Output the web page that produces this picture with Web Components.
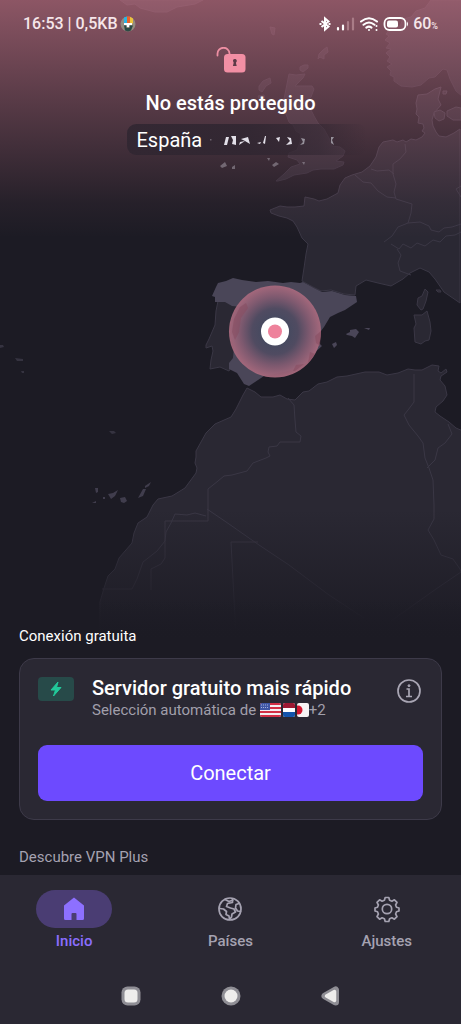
<!DOCTYPE html>
<html lang="es">
<head>
<meta charset="utf-8">
<meta name="viewport" content="width=device-width, initial-scale=1">
<title>VPN</title>
<style>
  body { margin: 0; background: #1c1b24; font-family: Roboto, "Noto Sans", sans-serif; color: #fff; }
</style>
</head>
<body>
<vpn-app></vpn-app>
<script>
const define = (name, html) => customElements.define(name, class extends HTMLElement {
  constructor() {
    super();
    const t = document.createElement('template');
    t.innerHTML = html;
    this.attachShadow({ mode: 'open' }).append(t.content.cloneNode(true));
  }
});

define('map-backdrop', `
<style>
  :host { display: block; overflow: hidden; }
  svg { display: block; width: 100%; height: 100%; }
  .land { fill: #2a2833; stroke: #3a3745; stroke-width: 1; stroke-linejoin: round; }
  .line { fill: none; stroke: #3a3745; stroke-width: 1; stroke-linejoin: round; }
  .soft { stroke: #312e3b; }
  .active { fill: #4a4658; }
</style>
<svg viewBox="0 0 461 640" preserveAspectRatio="xMidYMin slice" aria-hidden="true">
  <defs>
    <linearGradient id="alert" x1="0" y1="0" x2="0" y2="1">
      <stop offset="0" stop-color="#f08a9e" stop-opacity=".53"/>
      <stop offset=".45" stop-color="#f08a9e" stop-opacity=".27"/>
      <stop offset=".85" stop-color="#f08a9e" stop-opacity=".05"/>
      <stop offset="1" stop-color="#f08a9e" stop-opacity="0"/>
    </linearGradient>
    <linearGradient id="fade" x1="0" y1="0" x2="0" y2="1">
      <stop offset="0" stop-color="#1c1b24" stop-opacity="0"/>
      <stop offset="1" stop-color="#1c1b24"/>
    </linearGradient>
    <radialGradient id="pulse">
      <stop offset=".3" stop-color="#474a60"/>
      <stop offset=".5" stop-color="#504b61"/>
      <stop offset=".75" stop-color="#805a70" stop-opacity=".96"/>
      <stop offset="1" stop-color="#aa6a7e" stop-opacity=".93"/>
    </radialGradient>
  </defs>
  <rect width="461" height="640" fill="#1c1b24"/>
  <g class="land">
    <g class="soft">
      <path d="M120 0l7 5 8-1 5 4 15 4 12 0 10-5 18-3 8-4z"/>
      <path d="M431 0l-6 8-9 3-5 6-8 2-3 7-9 2-5 6 3 2-4 4 5 3-4 5 5 1-5 4 4 4-3 4 5 3-5 3 4 4-1 4 4 2 0 4 7 5 11 1 9-2 8-7 6-1 5-5 3-3 4 1 3 9 6 12 6 5V0z"/>
      <path d="M270 27l5 1-1 7-2-1zM319 54l4-4 4-3 1 5-4 3 0 4-4-2-2 2zM300 67l4-2 4 0 0 3-5 4-3-2zM289 74l7 1 9-1-2 4-8 8 17 0 2 3-3 8-6 5-3 3 8 3 4 8 4 7 6 6 5 9 3 8 8 1 5 4-2 5-7 5 8 1-1 3-9 4-13 0-8 1-6 3-13 2-8 4-8 2-2 0 8-7 7-7 9-3-3-4-9-3 1-4 8-3 3-8 1-8-5-3-3-6-4-3-3-8-3-2-2-10 3-3z"/>
      <path d="M259 86l4-5 7-3 1 5-5 3-4 6-3-2zM258 96l6-1 1 6-4 1z"/>
    </g>
    <path d="M441 87l-6 2-8 5-9 1-2 8 1 6-1 5 3 3-1 6 5 1 1 4-2 3 3 2-3 4-6 3-5-1-5 3-3-2-6 2-4-2-10 2-4 5-3 10-6 9-8 6-10 3-7 3-5 7-2 8-11 6-8 2-5-2-9-2-1 9-9 1-8 0-7-1-10 4 1 3 8 3 8 2 6 3 4 6 5 11 6 6-2 10-2 14-2 13 11 6 8 4 10-1 13 4 11 1 1-9 10-6 12 3 13 3 12-7 7-6 10-5 9 4 6 7 9 13 16 11V129l-6 4-8 4-7-1-3-4-3-6-1-6 2-7 7-8-3-6z"/>
    <path d="M434 112l6-2 5 3-1 6-5 2-4-3zM447 111l9-4 5 1v12l-8 0-6-4zM443 91l4 0-1 3-3 0z"/>
    <path d="M425 289l-3 7-4 2-1 7 4 5 2-1 3-8 2-9zM427 311l-5 4-8 0 2 9-2 4 1 14 6 2 4-3 4-1 2-9-1-9zM436 290l4 0 1 2-3 0z"/>
    <path d="M247 388l-4 7-7 14-5 8-16 7-9 9-5 9-5 9 0 6-1 6 2 5-1 5-11 15-13 8-14 3-5 6-6 12-9 6-4 10-2 10-13 15-4 11-7 7-4 12-4 14V640H470V434l-14-6-7-6-9-6-5-4 1-5 7-6 4-6-2-9-5-6 1-4 6-4-1-3-5 4-3-2 1-5-7-1-10 5-7 0-7-1-10 4-11 2-8-3-14 0-18 4-10 1-10 5-9 2-9 7-6 1-8 8-8-1-7-4-7 2-12 0-6-5z"/>
    <path d="M218 301l-2 10-1 14-6 14-3 6 0 3 6-2 1 5-2 9-1 9 10-2 9 4 4-7 1-7 3-9-3-10 7-16 4-12 3-5-11-1-6-4z"/>
  </g>
  <g class="active">
    <path d="M216 287l2-4 8-2 7-3 9 2 14 2 12-1 15 2 8-1 9 1 3-1 11 6 8 4 10-1 13 4 11 1 1 6-12 8-7 3-8 4-6 10-6 8 1 8 3 3-10 9-5 7-9 6-14 4-20 4-9 6-6 4-5-2-7-11-8-4 0-6 4-5 1-12-3-10 7-15 5-10-1-4-10-1-7-4-10 0 0-5-3-1z"/>
    <path d="M346 334l4-2 0-2 6-1 3 3-4 6-3-2-5-1zM364 328l6 0-1 2zM332 344l4-2 1 3-3 3z"/>
    <path d="M95 488l3 0 0 4-2 1zM108 494l5-1 5-3-3 6-4 3zM120 498l5-1 2 4-3 2-3-1zM138 498l5-9 3 0-3 7zM145 486l6-4-2 4-4 2zM92 503l4-2 0 2zM103 497l2 0 0 2-2 0z" opacity=".8"/>
  </g>
  <path d="M109 431l5 0 2 2-4 1zM0 345l3 0 1 2-4 1zM15 358l8 1 0 2-6 0zM21 371l3 0 0 2-2 0z" fill="#353340"/>
  <g class="line">
    <path d="M405 144l1 8-6 7-7 5 0 10 3 10-2 8 2 7 16 5-1 9-3 10-10 4-6 9-8 6M355 175l8 7 8 1 7 8 9 6 9 1M371 169l6 2 12-1 5 4M408 223l12-1 9 4 2 4 8 2 5-4 8-1 9-3M391 244l8 5 4-5 8 4 6-5 8 3 8-6 7 2 6-6 9-1 8-4M397 249l4 6-3 8 2 8 11 4M461 186l-5 3 5 8"/>
    <path d="M288 398l6 7 1 15 1 12 5 4-1 6-20 0-3 4-8 1-1 5 2 4-4 2-13 5-6 8-15 4-8 1-6 5-10 8v32H165v37l-4 6-10 5v21M207 509l22 15 30 21 30 20 40 30 35 23M206 516l-11-3-8 2-12-1-4 9-5 9-1 9-8 10-14 11-6 17-5 10H102M258 542H231l5 95M414 374l0 28-6 8-4 5 5 10 9 11 5 7 2 15 4 10 4 12 1 25 0 14-6 11 6 10 7 15 12 4 7 10 1 3-25 17-45 32M448 424l4 10-7 9-7 5-3 12-8 8"/>
  </g>
  <rect y="510" width="461" height="130" fill="url(#fade)"/>
  <rect y="600" width="461" height="40" fill="url(#fade)"/>
  <rect width="461" height="238" fill="url(#alert)"/>
  <g fill="#a39aa6" opacity=".55"><path d="M220 166l5-4 2 4-5 2zM232 167l3-2 0 4-3 0zM272 165l4-3 3 2-5 3zM267 158l3 0-1 3zM302 162l3 0-1 3z"/></g>
  <circle cx="275" cy="331.500" r="46" fill="url(#pulse)"/>
  <path d="M240 307l6-4 2 5-7 10-2 14-4 8-3-8 2-13zM321 331l-6 5 1 7 4 3zM310 352l-2 11 7-9zM295 371l9-7-8 1-3 6z" fill="#874d61" opacity=".55"/>
  <circle cx="275" cy="331.500" r="14" fill="#fff"/>
  <circle cx="275" cy="331.500" r="7" fill="#ee829b"/>
</svg>`);

define('status-bar', `
<style>
  :host { display: flex; justify-content: space-between; align-items: center; height: 47px; padding: 0 23px; box-sizing: border-box; font-size: 16px; font-weight: 500; color: #f6e6ea; }
  div { display: flex; align-items: center; gap: 4px; }
  svg { display: block; }
  small { font-size: 9px; }
  .left { gap: 2px; }
</style>
<div class="left"><span>16:53 | 0,5KB</span>
  <svg width="16" height="16" viewBox="0 0 16 16" aria-hidden="true"><circle cx="8" cy="8" r="7.500" fill="#938a80"/><path d="M4 1.500l3-1v7H4z" fill="#29b5e6"/><path d="M7 .5h3v7H7z" fill="#e8622c"/><path d="M10 .8l3 1.800v5h-3z" fill="#edc23c"/><path d="M4 7h8v2H9.500v2h-3V9H4z" fill="#fff"/><path d="M4 9.500h2.500V12h3V9.500H13l-2 5-3 1-3-1z" fill="#2c4a44"/></svg>
</div>
<div>
  <svg width="12" height="16" viewBox="0 0 12 16" aria-hidden="true" fill="none" stroke="#fff" stroke-width="2"><path d="M2.500 5l7 5.500-3.500 3v-11l3.500 3-7 5.500"/><path d="M.5 8H2.500M9.500 8H11.500"/></svg>
  <svg width="20" height="16" viewBox="0 0 20 16" aria-hidden="true" stroke-width="2.200" stroke-linecap="round"><path d="M3 12v1.500M8 9.500v4" stroke="#fff"/><path d="M13 6v7.500M18 2.500v11" stroke="#a97c87"/></svg>
  <svg width="20" height="16" viewBox="0 0 20 16" aria-hidden="true" fill="none" stroke="#fff" stroke-width="2" stroke-linecap="round"><path d="M2 5.500q8-6.500 16 0M4.500 8.800q5.500-4.500 11 0M7.300 11.600q2.700-2 5.200 0"/><path d="M10 14v0M17.500 10v0M17.500 14v0"/></svg>
  <svg width="26" height="16" viewBox="0 0 26 16" aria-hidden="true"><rect x="1.500" y="2" width="21" height="12" rx="5" fill="none" stroke="#fff" stroke-width="1.800"/><rect x="4" y="4.500" width="11" height="7" rx="2" fill="#fff"/><path d="M24 5.500q2 2.500 0 5z" fill="#fff"/></svg>
  <span>60<small>%</small></span>
</div>`);

define('connection-state', `
<style>
  :host { display: flex; flex-direction: column; align-items: center; }
  svg { display: block; }
  h1 { margin: 17px 0 9px; font-size: 20px; line-height: 24px; font-weight: 500; }
  .place { display: flex; align-items: center; gap: 6px; width: 240px; height: 31px; padding-left: 10px; margin-left: 32px; box-sizing: border-box; border-radius: 9px; font-size: 20px; background: linear-gradient(90deg, #302631e0 50%, #30263190 80%, #30263100); }
</style>
<svg class="lock" width="30" height="27" viewBox="0 0 30 27" aria-hidden="true"><path d="M1.500 8.500V7a6 6 0 0 1 12-.5V9" fill="none" stroke="#ee8fa3" stroke-width="1.800" stroke-linecap="round"/><rect x="8" y="7" width="21.500" height="18.500" rx="3.500" fill="#f28fa4"/><path d="M17 14a1.900 1.900 0 1 1 3.400 1l-.5.800.8 3.200h-3.800l.8-3.200z" fill="#5d3a47"/></svg>
<h1><slot name="title"></slot></h1>
<div class="place"><slot name="place"></slot>
  <svg width="130" height="20" viewBox="0 0 130 20" aria-hidden="true"><path d="M2 9h1.500v1.500H2z" fill="#6d626d"/><path d="M18 7l3 0-2 8-3 0zM23 6l5 0 0 9-4-1 1-4zM33 9l7-2 2 7-5-3-6 4 1-3 5-1zM57 6l1 0-1 8-2-1zM49 13l4-1-1 2zM68 8l4-1-1 5zM79 7l4 1 1 6-6 1 4-4z" fill="#e2dfe8"/><path d="M93 8l4 1-1 5-4 1 3-3zM123 7l3 0-2 3 2 5-3-2z" fill="#96919b"/></svg>
</div>`);

define('flag-set', `
<style>:host { display: inline-flex; gap: 2px; vertical-align: -2px; } svg { display: block; border-radius: 2px; }</style>
<svg width="21" height="14" viewBox="0 0 21 14" role="img" aria-label="Estados Unidos"><rect width="21" height="14" fill="#f3eef0"/><path d="M0 1h21M0 5h21M0 9h21M0 13h21" stroke="#d22f45" stroke-width="2"/><rect width="10" height="7" fill="#3f56a5"/><path d="M1 2h8M1 4.500h8" stroke="#a4b0dc" stroke-dasharray="1 1"/></svg>
<svg width="12" height="14" viewBox="0 0 12 14" role="img" aria-label="Países Bajos"><rect width="12" height="14" fill="#fff"/><rect width="12" height="5" fill="#9d1832"/><rect y="9" width="12" height="5" fill="#1454ab"/></svg>
<svg width="12" height="14" viewBox="0 0 12 14" role="img" aria-label="Japón"><rect width="12" height="14" fill="#f6f3f4"/><circle cx="1" cy="7" r="4.500" fill="#d0152f"/></svg>`);

define('server-card', `
<style>
  :host { display: block; padding: 18px; border: 1px solid #3d3a49; border-radius: 15px; background: #2a2833; }
  .head { display: flex; align-items: flex-start; gap: 18px; margin-bottom: 24px; }
  .text { flex: 1; }
  h2 { margin: 0; font-size: 20px; line-height: 22px; font-weight: 500; }
  p { margin: 0; font-size: 15px; line-height: 22px; color: #a19fab; }
  svg { display: block; }
  .info { margin: 1px 1px 0 0; padding: 0; border: 0; background: none; color: #a9a6b4; }
  .go { display: block; width: 100%; height: 56px; border: 0; border-radius: 9px; background: #6d4aff; color: #fff; font: 400 20px Roboto, sans-serif; }
</style>
<div class="head">
  <svg width="36" height="24" viewBox="0 0 36 24" aria-hidden="true"><rect width="36" height="24" rx="4" fill="#274a49"/><path d="M20 5L13 13h4.500L15.500 19l7.500-8.500h-4.500z" fill="#22c99a" stroke="#22c99a" stroke-linejoin="round"/></svg>
  <div class="text"><h2><slot name="title"></slot></h2><p><slot name="detail"></slot></p></div>
  <button class="info" aria-label="Información"><svg width="26" height="26" viewBox="0 0 26 26" fill="none" stroke="currentColor" stroke-width="1.700"><circle cx="13" cy="13" r="11"/><path d="M10.500 11H13v7M10 18.500h6"/><circle cx="13" cy="7.700" r="1" fill="currentColor" stroke-width="1"/></svg></button>
</div>
<button class="go"><slot name="action"></slot></button>`);

define('nav-item', `
<style>
  :host { display: block; flex: 1; }
  a { display: flex; flex-direction: column; align-items: center; gap: 3px; color: #a5a2b1; text-decoration: none; font-size: 15px; line-height: 20px; font-weight: 500; }
  .pill { display: grid; place-items: center; width: 76px; height: 38px; border-radius: 19px; }
  :host([active]) a { color: #8a6eff; }
  :host([active]) .pill { background: #4a3d73; }
</style>
<a href="#"><span class="pill"><slot name="icon"></slot></span><span><slot></slot></span></a>`);

define('bottom-nav', `
<style>:host { display: flex; justify-content: center; padding: 15px 0 0; margin: 0 -4px; background: #2a2833; }</style>
<slot></slot>`);

define('system-nav', `
<style>
  :host { display: flex; justify-content: center; gap: 80px; padding: 35px 0 18px; background: #2a2833; }
  button { padding: 0; border: 0; background: none; }
  svg { display: block; }
</style>
<button aria-label="Recientes"><svg width="20" height="20" viewBox="0 0 20 20"><rect x=".5" y=".5" width="19" height="19" rx="6" fill="#8f8e95"/><rect x="3.500" y="3.500" width="13" height="13" rx="3.500" fill="#eeedec"/></svg></button>
<button aria-label="Inicio"><svg width="20" height="20" viewBox="0 0 20 20"><circle cx="10" cy="10" r="9.500" fill="#8f8e95"/><circle cx="10" cy="10" r="6.500" fill="#eeedec"/></svg></button>
<button aria-label="Atrás"><svg width="20" height="20" viewBox="0 0 20 20" stroke-linejoin="round"><path d="M4 10L14.500 4v12z" fill="#8f8e95" stroke="#8f8e95" stroke-width="7"/><path d="M5.500 10L13.500 5.500v9z" fill="#eeedec" stroke="#eeedec" stroke-width="3.500"/></svg></button>`);

define('vpn-app', `
<style>
  :host { display: flex; flex-direction: column; min-height: 100vh; position: relative; overflow: hidden; }
  map-backdrop { position: absolute; inset: 0 0 auto 0; aspect-ratio: 461 / 640; z-index: -1; }
  main { flex: 1; display: flex; flex-direction: column; justify-content: space-between; }
  .sheet { padding: 0 19px 8px; }
  .label { margin: 0 0 12px; font-size: 15px; line-height: 20px; font-weight: 400; }
  .more { margin: 27px 0 0; color: #a5a2b1; }
  svg { display: block; }
</style>
<map-backdrop></map-backdrop>
<status-bar></status-bar>
<main>
  <connection-state><span slot="title">No estás protegido</span><span slot="place">España</span></connection-state>
  <section class="sheet">
    <h2 class="label">Conexión gratuita</h2>
    <server-card>
      <span slot="title">Servidor gratuito mais rápido</span>
      <span slot="detail">Selección automática de <flag-set></flag-set>+2</span>
      <span slot="action">Conectar</span>
    </server-card>
    <h2 class="label more">Descubre VPN Plus</h2>
  </section>
</main>
<bottom-nav>
  <nav-item active><svg slot="icon" width="28" height="28" viewBox="0 0 28 28" aria-hidden="true"><path d="M14 2.500L24 10.500V23.500a1.500 1.500 0 0 1-1.500 1.500H16.500V19a1 1 0 0 0-1-1h-3a1 1 0 0 0-1 1v6H5.500A1.500 1.500 0 0 1 4 23.500V10.500z" fill="#8d70ff"/></svg>Inicio</nav-item>
  <nav-item><svg slot="icon" width="28" height="28" viewBox="0 0 28 28" fill="none" stroke="#a5a2b1" stroke-width="1.700" stroke-linejoin="round" stroke-linecap="round" aria-hidden="true"><circle cx="14" cy="14" r="11"/><path d="M3.500 13.500l4 .5 3 2.500-.5 3 3 1.500.5 3.500M9 4.500l4 2 4-1.500M16.500 4v3.500l-5 1-1 3 4 1.500 3.500 1 1.500 3-3.500 2-.5 3-1.500 2M23 8.500l-3 1-.5 3.500 2 3 3 .5"/></svg>Países</nav-item>
  <nav-item><svg slot="icon" width="28" height="28" viewBox="0 0 28 28" fill="none" stroke="#a5a2b1" stroke-width="1.700" stroke-linejoin="round" aria-hidden="true"><circle cx="14" cy="14" r="4.700"/><path d="M12.200 2.500h3.600l.8 2.800 2.300.9L21.400 4.800l2.600 2.600-1.400 2.600.9 2.200 2.500.8v3l-2.500.8-.9 2.200 1.400 2.600-2.600 2.600-2.500-1.400-2.300.9-.8 2.800h-3.600l-.8-2.800-2.300-.9-2.500 1.400L4 21.600 5.400 19l-.9-2.200L2 16v-3l2.500-.8.9-2.200L4 7.400l2.600-2.600 2.500 1.400 2.300-.9z"/></svg>Ajustes</nav-item>
</bottom-nav>
<system-nav></system-nav>`);
</script>
</body>
</html>
